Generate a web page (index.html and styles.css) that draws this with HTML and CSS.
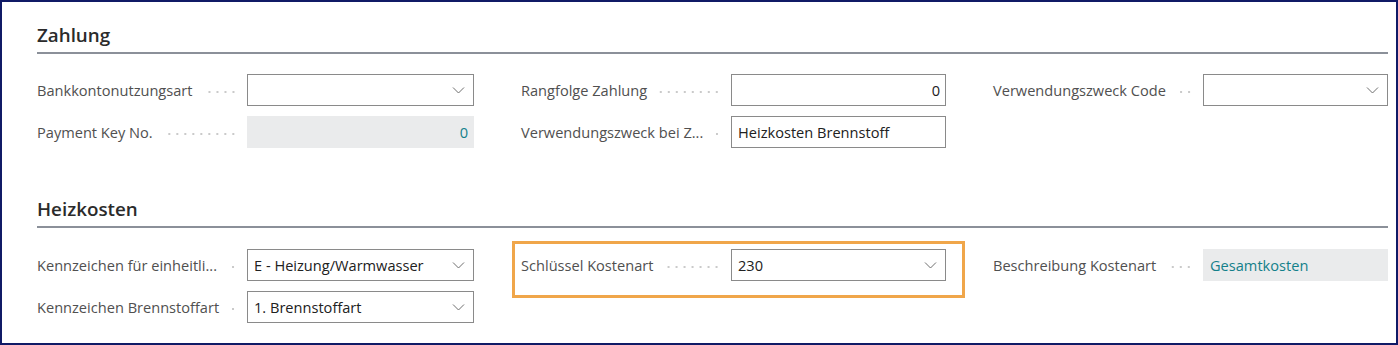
FILE: index.html
```html
<!DOCTYPE html>
<html lang="de">
<head>
  <meta charset="UTF-8">
  <meta name="viewport" content="width=device-width, initial-scale=1.0">
  <title>Zahlung / Heizkosten</title>
  <link rel="stylesheet" href="styles.css">
</head>
<body>

  <div class="frame">

    <!-- Zahlung -->
    <section class="group">
      <h2 class="group-title">Zahlung</h2>
      <div class="fields">
        <div class="col">
          <div class="field">
            <div class="caption"><span class="label">Bankkontonutzungsart</span><span class="dots"></span></div>
            <div class="input select"><span class="value"></span><svg class="chevron" viewBox="0 0 12 7"><polyline points="0.5,0.5 6,6 11.5,0.5"/></svg></div>
          </div>
          <div class="field">
            <div class="caption"><span class="label">Payment Key No.</span><span class="dots"></span></div>
            <div class="input readonly number"><span class="value link">0</span></div>
          </div>
        </div>
        <div class="col">
          <div class="field">
            <div class="caption"><span class="label">Rangfolge Zahlung</span><span class="dots"></span></div>
            <div class="input number"><span class="value">0</span></div>
          </div>
          <div class="field">
            <div class="caption"><span class="label">Verwendungszweck bei Z...</span><span class="dots"></span></div>
            <div class="input"><span class="value">Heizkosten Brennstoff</span></div>
          </div>
        </div>
        <div class="col">
          <div class="field">
            <div class="caption"><span class="label">Verwendungszweck Code</span><span class="dots"></span></div>
            <div class="input select"><span class="value"></span><svg class="chevron" viewBox="0 0 12 7"><polyline points="0.5,0.5 6,6 11.5,0.5"/></svg></div>
          </div>
        </div>
      </div>
    </section>

    <!-- Heizkosten -->
    <section class="group">
      <h2 class="group-title">Heizkosten</h2>
      <div class="fields">
        <div class="col">
          <div class="field">
            <div class="caption"><span class="label">Kennzeichen für einheitli...</span><span class="dots"></span></div>
            <div class="input select"><span class="value">E - Heizung/Warmwasser</span><svg class="chevron" viewBox="0 0 12 7"><polyline points="0.5,0.5 6,6 11.5,0.5"/></svg></div>
          </div>
          <div class="field">
            <div class="caption"><span class="label">Kennzeichen Brennstoffart</span><span class="dots"></span></div>
            <div class="input select"><span class="value">1. Brennstoffart</span><svg class="chevron" viewBox="0 0 12 7"><polyline points="0.5,0.5 6,6 11.5,0.5"/></svg></div>
          </div>
        </div>
        <div class="col">
          <div class="field highlighted">
            <div class="caption"><span class="label">Schlüssel Kostenart</span><span class="dots"></span></div>
            <div class="input select"><span class="value">230</span><svg class="chevron" viewBox="0 0 12 7"><polyline points="0.5,0.5 6,6 11.5,0.5"/></svg></div>
          </div>
        </div>
        <div class="col">
          <div class="field">
            <div class="caption"><span class="label">Beschreibung Kostenart</span><span class="dots"></span></div>
            <div class="input readonly"><span class="value link">Gesamtkosten</span></div>
          </div>
        </div>
      </div>
    </section>

  </div>

</body>
</html>
```

FILE: styles.css
```css
html, body {
  margin: 0;
  padding: 0;
  background-color: #fff;
}

body {
  font-family: 'Open Sans', 'Noto Sans', sans-serif;
  color: #212121;
}

.frame {
  box-sizing: border-box;
  width: 1398px;
  height: 345px;
  border: 2px solid #101a66;
  padding: 20px 0 0 35px;
}

.group {
  width: 1351px;
}

.group + .group {
  margin-top: 48px;
}

.group-title {
  margin: 0;
  font-size: 18.8px;
  font-weight: 600;
  line-height: 26px;
  padding-bottom: 4px;
  color: #2b2b2b;
  border-bottom: 2px solid #8b9099;
}

.fields {
  display: grid;
  grid-template-columns: 437px 425px 395px;
  column-gap: 47px;
  margin-top: 20px;
}

.group + .group .fields {
  margin-top: 21px;
}

.col {
  display: flex;
  flex-direction: column;
  gap: 10px;
}

.field {
  display: grid;
  grid-template-columns: 210px 1fr;
  height: 32px;
  position: relative;
}

.caption {
  display: flex;
  align-items: center;
  padding-right: 10px;
  min-width: 0;
}

.label {
  font-size: 14.6px;
  color: #505050;
  white-space: nowrap;
}

.dots {
  flex: 1;
  height: 4px;
  margin: 4px 0 0 10px;
  background-image: radial-gradient(circle, #cacaca 0.9px, transparent 1.2px);
  background-size: 8px 4px;
  background-position: right center;
  background-repeat: repeat-x;
}

.input {
  box-sizing: border-box;
  display: flex;
  align-items: center;
  height: 32px;
  padding: 0 5px 0 6px;
  border: 1px solid #8a8a8a;
  background-color: #fff;
  font-size: 14.6px;
}

.input .value {
  flex: 1;
  white-space: nowrap;
}

.input.number .value {
  text-align: right;
}

.input.readonly {
  border-color: transparent;
  background-color: #eaebec;
}

.value.link {
  color: #13808a;
}

.chevron {
  width: 13px;
  height: 7px;
  margin-right: 3px;
  fill: none;
  stroke: #6e6e6e;
  stroke-width: 1;
}

.highlighted::after {
  content: '';
  position: absolute;
  top: -8px;
  left: -9px;
  right: -19px;
  bottom: -17px;
  border: 3px solid #f0a64a;
  pointer-events: none;
}
```
